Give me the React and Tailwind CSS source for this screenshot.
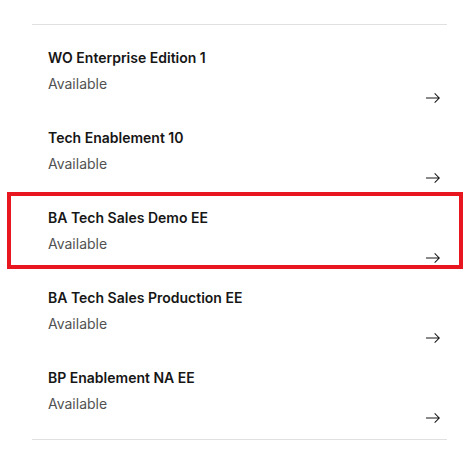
const items = [
  { name: "WO Enterprise Edition 1", status: "Available" },
  { name: "Tech Enablement 10", status: "Available" },
  { name: "BA Tech Sales Demo EE", status: "Available" },
  { name: "BA Tech Sales Production EE", status: "Available" },
  { name: "BP Enablement NA EE", status: "Available" },
];

const ArrowRight = () => (
  <svg width="16" height="16" viewBox="0 0 16 16" fill="currentColor">
    <path d="M9.3 3.7 13.1 7.5 1 7.5 1 8.5 13.1 8.5 9.3 12.3 10 13 15 8 10 3z" />
  </svg>
);

const InstanceTile = ({ name, status }) => (
  <div className="relative h-[80px] px-4 pt-[10px] cursor-pointer hover:bg-[#e8e8e8]">
    <p className="text-[14px] leading-[18px] font-semibold text-[#161616]">{name}</p>
    <p className="mt-2 text-[14px] leading-[18px] text-[#525252]">{status}</p>
    <span className="absolute right-[6px] top-[51px] text-[#161616]">
      <ArrowRight />
    </span>
  </div>
);

export default function App() {
  return (
    <div className="w-[474px] h-[451px] bg-white" style={{ fontFamily: "Inter, 'Noto Sans', sans-serif" }}>
      <div className="pt-6 pl-8 w-[447px]">
        <div className="relative border-t border-b border-[#e0e0e0] pt-[14px]">
          {items.map((item) => (
            <InstanceTile key={item.name} name={item.name} status={item.status} />
          ))}
          {/* highlight around the selected tile */}
          <div className="absolute left-[-25px] top-[167px] w-[456px] h-[77px] border-[4px] border-[#e8171f] pointer-events-none" />
        </div>
      </div>
    </div>
  );
}
